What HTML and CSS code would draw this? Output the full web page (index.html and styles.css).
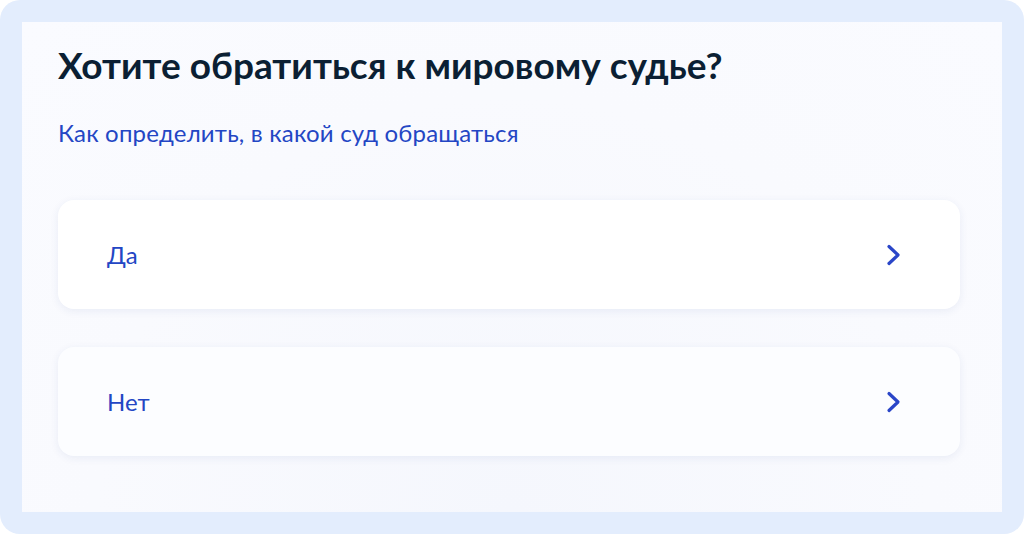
FILE: index.html
```html
<!DOCTYPE html>
<html lang="ru">
<head>
<meta charset="utf-8">
<link rel="stylesheet" href="styles.css">
</head>
<body>
<div class="frame">
  <div class="panel">
    <h1 class="title">Хотите обратиться к мировому судье?</h1>
    <a class="link" href="#">Как определить, в какой суд обращаться</a>
    <div class="options">
      <div class="option">
        <span class="option-text">Да</span>
        <svg class="chev" width="16" height="22" viewBox="0 0 16 22"><path d="M3 2.5 L12 11 L3 19.5" fill="none" stroke="#2a46c8" stroke-width="3.2" stroke-linecap="round" stroke-linejoin="round"/></svg>
      </div>
      <div class="option option-alt">
        <span class="option-text">Нет</span>
        <svg class="chev" width="16" height="22" viewBox="0 0 16 22"><path d="M3 2.5 L12 11 L3 19.5" fill="none" stroke="#2a46c8" stroke-width="3.2" stroke-linecap="round" stroke-linejoin="round"/></svg>
      </div>
    </div>
  </div>
</div>
</body>
</html>
```

FILE: styles.css
```css
html, body {
  margin: 0;
  padding: 0;
  background: #ffffff;
}
body {
  font-family: Lato, "Noto Sans", sans-serif;
  width: 1024px;
  height: 534px;
  overflow: hidden;
}
.frame {
  width: 1024px;
  height: 534px;
  box-sizing: border-box;
  background: #e3edfd;
  border-radius: 20px;
  padding: 22px;
}
.panel {
  height: 490px;
  box-sizing: border-box;
  background: radial-gradient(ellipse at 50% 100%, #f5f7fd 0%, #f9fafe 60%, #fafbff 100%);
  padding: 21px 42px 0 36px;
}
.title {
  margin: 0;
  font-size: 37px;
  font-weight: 700;
  line-height: 44px;
  color: #0b1f33;
  letter-spacing: 0;
}
.link {
  display: block;
  margin-top: 32px;
  font-size: 24px;
  line-height: 28px;
  letter-spacing: 0.18px;
  color: #2346c4;
  text-decoration: none;
}
.options {
  margin-top: 53px;
  display: flex;
  flex-direction: column;
  gap: 38px;
}
.option {
  height: 109px;
  box-sizing: border-box;
  background: #ffffff;
  border-radius: 16px;
  box-shadow: 0 2px 8px rgba(40, 60, 140, 0.08);
  display: flex;
  align-items: center;
  justify-content: space-between;
  padding: 0 58px 0 49px;
}
.option-alt {
  background: #fcfdff;
}
.option-text {
  font-size: 24px;
  color: #2346c4;
}
.chev {
  display: block;
}
```
